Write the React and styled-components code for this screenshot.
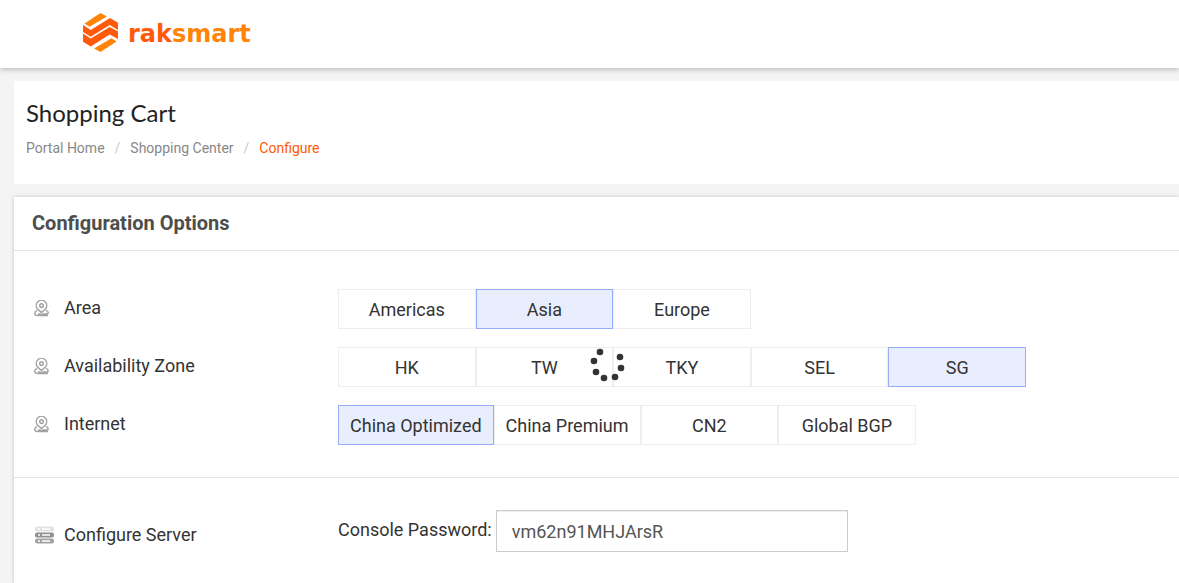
import React, { useState } from "react";
import styled, { createGlobalStyle } from "styled-components";

const GlobalStyle = createGlobalStyle`
  * {
    box-sizing: border-box;
  }
  body {
    margin: 0;
    min-height: 100vh;
    background: #f4f4f4;
    color: #333;
    font-family: Roboto, "Liberation Sans", sans-serif;
    font-size: 18px;
    line-height: 24px;
    overflow-x: hidden;
  }
`;

const Page = styled.div`
  display: flex;
  flex-direction: column;
  min-height: 100vh;
`;

const Header = styled.header`
  display: flex;
  align-items: center;
  height: 68px;
  padding: 0 83px 4px;
  background: #fff;
  box-shadow: 0 1px 6px rgba(0, 0, 0, 0.28);
`;

const Logo = styled.a`
  display: flex;
  align-items: center;
  gap: 10px;
  color: #ff5a0a;
  font-family: "DejaVu Sans", sans-serif;
  font-size: 24px;
  font-weight: 700;
  text-decoration: none;
`;

const LogoText = styled.span`
  padding-top: 3px;
`;

const LogoTail = styled.span`
  color: #ff8408;
`;

const Main = styled.main`
  display: flex;
  flex: 1;
  flex-direction: column;
  gap: 13px;
  padding: 13px 0 0 14px;
`;

const TitleCard = styled.section`
  height: 103px;
  padding: 16px 12px;
  background: #fff;
`;

const PageTitle = styled.h1`
  margin: 0 0 8px;
  color: #222;
  font-family: Lato, sans-serif;
  font-size: 24px;
  font-weight: 400;
  line-height: 32px;
`;

const Breadcrumb = styled.ol`
  display: flex;
  margin: 0;
  padding: 0;
  list-style: none;
  font-size: 14px;
  line-height: 22px;
`;

const Crumb = styled.li`
  & + &::before {
    content: "/";
    padding: 0 10px;
    color: #ccc;
  }
`;

const CrumbLink = styled.a`
  color: ${(props) => (props.$active ? "#ff5a00" : "#888")};
  text-decoration: none;
`;

const Panel = styled.section`
  flex: 1;
  background: #fff;
  box-shadow: 0 0 4px rgba(0, 0, 0, 0.2);
`;

const PanelTitle = styled.h2`
  margin: 0;
  padding: 14px 18px 15px;
  border-bottom: 1px solid #e4e4e4;
  color: #4d4d4d;
  font-size: 20px;
  font-weight: 700;
  line-height: 24px;
`;

const OptionSection = styled.div`
  position: relative;
  display: flex;
  flex-direction: column;
  gap: 18px;
  padding: 38px 20px 32px;
  border-bottom: 1px solid #e4e4e4;
`;

const ServerSection = styled.div`
  padding: 32px 20px;
`;

const Row = styled.div`
  display: grid;
  grid-template-columns: 304px minmax(0, 1fr);
`;

const RowLabel = styled.div`
  display: grid;
  grid-template-columns: 30px 1fr;
  align-items: center;
  padding: ${(props) => (props.$low ? "8px 0 0" : "0 0 2px")};
`;

const Options = styled.div`
  display: flex;
  max-width: 688px;
`;

const Option = styled.button`
  flex: none;
  min-width: 20%;
  height: 40px;
  padding: 2px 11px 0;
  border: 1px solid ${(props) => (props.$selected ? "#97abfb" : "#eee")};
  background: ${(props) => (props.$selected ? "#e8eefe" : "#fff")};
  color: #333;
  font: inherit;
  cursor: pointer;
`;

const Field = styled.div`
  display: flex;
  align-items: center;
  gap: 4px;
`;

const FieldLabel = styled.label`
  padding-bottom: 2px;
`;

const TextInput = styled.input`
  width: 352px;
  height: 42px;
  padding: 0 15px;
  border: 1px solid #ccc;
  border-radius: 0;
  box-shadow: inset 0 1px 1px rgba(0, 0, 0, 0.08);
  color: #555;
  font: inherit;
`;

const Spinner = styled.svg`
  position: absolute;
  top: 50%;
  left: 51%;
  transform: translate(-50%, -50%);
`;

const LogoMark = () => (
  <svg width="35" height="39" viewBox="0 0 35 39" aria-hidden="true">
    <path fill="#ff8408" d="M1.5 10.5 17.5 0 24 3.5 6.5 13.8z" />
    <path
      fill="#ff5a0a"
      d="M0 12l7.7 5L27 5l8 4.7V17l-8.3-5L7.7 23.7 0 19z"
    />
    <path
      fill="#ff5a0a"
      d="M0 20.5l7.7 5 19-11.5 8.3 4.5V26l-8.3-4.5-19 12L0 28.7z"
    />
    <path fill="#ff8408" d="M33.5 28.5 17.5 39 11 35.5 28.5 25.2z" />
  </svg>
);

const PinIcon = () => (
  <svg
    width="15"
    height="17"
    viewBox="0 0 15 17"
    fill="none"
    stroke="#a3a3a3"
    strokeWidth="1.5"
    aria-hidden="true"
  >
    <path d="M7.5 12.6 3.6 9A5.2 5.2 0 1 1 11.4 9z" />
    <circle cx="7.5" cy="5.6" r="1.8" />
    <path d="M3.2 10.4C1.6 11 .8 12 .8 13.2c0 1.5 1.1 2.3 2.9 2.3H14M11.8 10.4c1.6.5 2.4 1.4 2.4 2.3 0 .8-.7 1.2-1.5 1.2H9.2l-1.7 1-1.8-1H4" />
  </svg>
);

const ServerIcon = () => (
  <svg width="20" height="18" viewBox="0 0 20 18" aria-hidden="true">
    <rect x="1" y="0.5" width="19" height="5" rx="1.5" fill="#e2e2e2" />
    <rect x="1" y="6.5" width="19" height="5" rx="2" fill="#919191" />
    <rect x="1" y="12.5" width="19" height="5" rx="2" fill="#a3a3a3" />
    <path
      d="M4 3h2m2 0h8M4 9h2m2 0h8M4 15h2m2 0h8"
      stroke="#fff"
      strokeWidth="1.4"
    />
  </svg>
);

const dots = [
  [12, 8],
  [6, 17],
  [8, 28],
  [16, 34],
  [27, 33],
  [33, 24],
  [32, 13],
];

const Loading = () => (
  <Spinner width="40" height="40" viewBox="0 0 40 40" role="status">
    {dots.map(([x, y]) => (
      <circle key={`${x}-${y}`} cx={x} cy={y} r="3.3" fill="#333" />
    ))}
  </Spinner>
);

const groups = [
  { label: "Area", options: ["Americas", "Asia", "Europe"], initial: "Asia" },
  {
    label: "Availability Zone",
    options: ["HK", "TW", "TKY", "SEL", "SG"],
    initial: "SG",
  },
  {
    label: "Internet",
    options: ["China Optimized", "China Premium", "CN2", "Global BGP"],
    initial: "China Optimized",
  },
];

const OptionRow = ({ label, options, initial }) => {
  const [selected, setSelected] = useState(initial);
  return (
    <Row>
      <RowLabel>
        <PinIcon />
        <span>{label}</span>
      </RowLabel>
      <Options role="group" aria-label={label}>
        {options.map((option) => (
          <Option
            key={option}
            type="button"
            $selected={option === selected}
            aria-pressed={option === selected}
            onClick={() => setSelected(option)}
          >
            {option}
          </Option>
        ))}
      </Options>
    </Row>
  );
};

const App = () => (
  <>
    <GlobalStyle />
    <Page>
      <Header>
        <Logo href="#">
          <LogoMark />
          <LogoText>
            rak<LogoTail>smart</LogoTail>
          </LogoText>
        </Logo>
      </Header>
      <Main>
        <TitleCard>
          <PageTitle>Shopping Cart</PageTitle>
          <nav aria-label="Breadcrumb">
            <Breadcrumb>
              <Crumb>
                <CrumbLink href="#">Portal Home</CrumbLink>
              </Crumb>
              <Crumb>
                <CrumbLink href="#">Shopping Center</CrumbLink>
              </Crumb>
              <Crumb>
                <CrumbLink href="#" $active aria-current="page">
                  Configure
                </CrumbLink>
              </Crumb>
            </Breadcrumb>
          </nav>
        </TitleCard>
        <Panel>
          <PanelTitle>Configuration Options</PanelTitle>
          <OptionSection>
            {groups.map((group) => (
              <OptionRow key={group.label} {...group} />
            ))}
            <Loading />
          </OptionSection>
          <ServerSection>
            <Row>
              <RowLabel $low>
                <ServerIcon />
                <span>Configure Server</span>
              </RowLabel>
              <Field>
                <FieldLabel htmlFor="password">Console Password:</FieldLabel>
                <TextInput
                  id="password"
                  type="text"
                  defaultValue="vm62n91MHJArsR"
                />
              </Field>
            </Row>
          </ServerSection>
        </Panel>
      </Main>
    </Page>
  </>
);

export default App;
